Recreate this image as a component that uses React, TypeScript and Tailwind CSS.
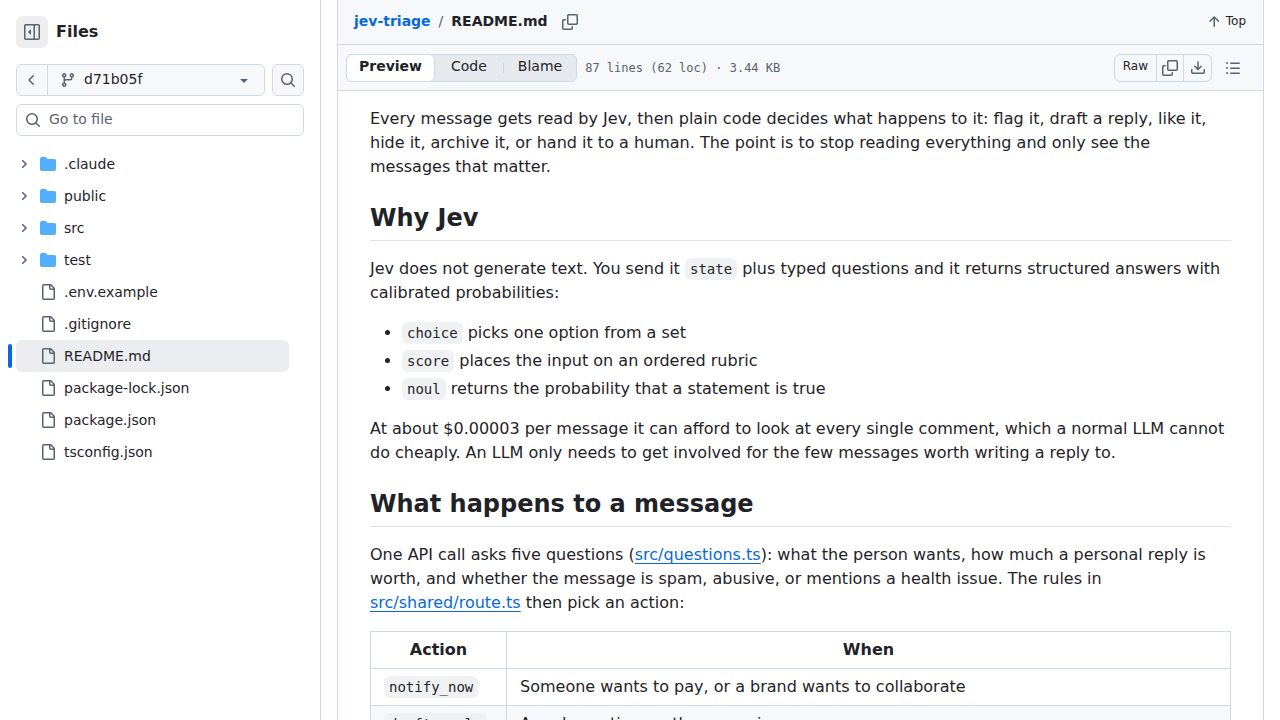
import { clsx } from "clsx";
import type { ReactNode } from "react";

/** Icon outlines, 16px grid unless a size is given */
const ICONS = {
  sidebar: [
    "m4.177 7.823 2.396-2.396A.25.25 0 0 1 7 5.604v4.792a.25.25 0 0 1-.427.177L4.177 8.177a.25.25 0 0 1 0-.354Z",
    "M0 1.75C0 .784.784 0 1.75 0h12.5C15.216 0 16 .784 16 1.75v12.5A1.75 1.75 0 0 1 14.25 16H1.75A1.75 1.75 0 0 1 0 14.25Zm1.75-.25a.25.25 0 0 0-.25.25v12.5c0 .138.112.25.25.25H9.5v-13Zm12.5 13a.25.25 0 0 0 .25-.25V1.75a.25.25 0 0 0-.25-.25H11v13Z",
  ],
  chevronLeft: [
    "M9.78 12.78a.75.75 0 0 1-1.06 0L4.47 8.53a.75.75 0 0 1 0-1.06l4.25-4.25a.751.751 0 0 1 1.042.018.751.751 0 0 1 .018 1.042L6.06 8l3.72 3.72a.75.75 0 0 1 0 1.06Z",
  ],
  chevronRight: [
    "M4.7 10c-.2 0-.4-.1-.5-.2-.3-.3-.3-.8 0-1.1L6.9 6 4.2 3.3c-.3-.3-.3-.8 0-1.1.3-.3.8-.3 1.1 0l3.3 3.2c.3.3.3.8 0 1.1L5.3 9.7c-.2.2-.4.3-.6.3Z",
  ],
  branch: [
    "M9.5 3.25a2.25 2.25 0 1 1 3 2.122V6A2.5 2.5 0 0 1 10 8.5H6a1 1 0 0 0-1 1v1.128a2.251 2.251 0 1 1-1.5 0V5.372a2.25 2.25 0 1 1 1.5 0v1.836A2.493 2.493 0 0 1 6 7h4a1 1 0 0 0 1-1v-.628A2.25 2.25 0 0 1 9.5 3.25Zm-6 0a.75.75 0 1 0 1.5 0 .75.75 0 0 0-1.5 0Zm8.25-.75a.75.75 0 1 0 0 1.5.75.75 0 0 0 0-1.5ZM4.25 12a.75.75 0 1 0 0 1.5.75.75 0 0 0 0-1.5Z",
  ],
  search: [
    "M10.68 11.74a6 6 0 0 1-7.922-8.982 6 6 0 0 1 8.982 7.922l3.04 3.04a.749.749 0 0 1-.326 1.275.749.749 0 0 1-.734-.215ZM11.5 7a4.499 4.499 0 1 0-8.997 0A4.499 4.499 0 0 0 11.5 7Z",
  ],
  triangleDown: [
    "m4.427 7.427 3.396 3.396a.25.25 0 0 0 .354 0l3.396-3.396A.25.25 0 0 0 11.396 7H4.604a.25.25 0 0 0-.177.427Z",
  ],
  folder: [
    "M1.75 1A1.75 1.75 0 0 0 0 2.75v10.5C0 14.216.784 15 1.75 15h12.5A1.75 1.75 0 0 0 16 13.25v-8.5A1.75 1.75 0 0 0 14.25 3H7.5a.25.25 0 0 1-.2-.1l-.9-1.2C6.07 1.26 5.55 1 5 1H1.75Z",
  ],
  file: [
    "M2 1.75C2 .784 2.784 0 3.75 0h6.586c.464 0 .909.184 1.237.513l2.914 2.914c.329.328.513.773.513 1.237v9.586A1.75 1.75 0 0 1 13.25 16h-9.5A1.75 1.75 0 0 1 2 14.25Zm1.75-.25a.25.25 0 0 0-.25.25v12.5c0 .138.112.25.25.25h9.5a.25.25 0 0 0 .25-.25V6h-2.75A1.75 1.75 0 0 1 9 4.25V1.5Zm6.75.062V4.25c0 .138.112.25.25.25h2.688l-.011-.013-2.914-2.914-.013-.011Z",
  ],
  copy: [
    "M0 6.75C0 5.784.784 5 1.75 5h1.5a.75.75 0 0 1 0 1.5h-1.5a.25.25 0 0 0-.25.25v7.5c0 .138.112.25.25.25h7.5a.25.25 0 0 0 .25-.25v-1.5a.75.75 0 0 1 1.5 0v1.5A1.75 1.75 0 0 1 9.25 16h-7.5A1.75 1.75 0 0 1 0 14.25Z",
    "M5 1.75C5 .784 5.784 0 6.75 0h7.5C15.216 0 16 .784 16 1.75v7.5A1.75 1.75 0 0 1 14.25 11h-7.5A1.75 1.75 0 0 1 5 9.25Zm1.75-.25a.25.25 0 0 0-.25.25v7.5c0 .138.112.25.25.25h7.5a.25.25 0 0 0 .25-.25v-7.5a.25.25 0 0 0-.25-.25Z",
  ],
  download: [
    "M2.75 14A1.75 1.75 0 0 1 1 12.25v-2.5a.75.75 0 0 1 1.5 0v2.5c0 .138.112.25.25.25h10.5a.25.25 0 0 0 .25-.25v-2.5a.75.75 0 0 1 1.5 0v2.5A1.75 1.75 0 0 1 13.25 14Z",
    "M7.25 7.689V2a.75.75 0 0 1 1.5 0v5.689l1.97-1.969a.749.749 0 1 1 1.06 1.06l-3.25 3.25a.749.749 0 0 1-1.06 0L4.22 6.78a.749.749 0 1 1 1.06-1.06l1.97 1.969Z",
  ],
  list: [
    "M5.75 2.5h8.5a.75.75 0 0 1 0 1.5h-8.5a.75.75 0 0 1 0-1.5Zm0 5h8.5a.75.75 0 0 1 0 1.5h-8.5a.75.75 0 0 1 0-1.5Zm0 5h8.5a.75.75 0 0 1 0 1.5h-8.5a.75.75 0 0 1 0-1.5ZM2 14a1 1 0 1 1 0-2 1 1 0 0 1 0 2Zm1-6a1 1 0 1 1-2 0 1 1 0 0 1 2 0ZM2 4a1 1 0 1 1 0-2 1 1 0 0 1 0 2Z",
  ],
  arrowUp: [
    "M3.47 7.78a.75.75 0 0 1 0-1.06l4.25-4.25a.75.75 0 0 1 1.06 0l4.25 4.25a.751.751 0 0 1-.018 1.042.751.751 0 0 1-1.042.018L9 4.81v7.44a.75.75 0 0 1-1.5 0V4.81L4.53 7.78a.75.75 0 0 1-1.06 0Z",
  ],
};

interface IconProps {
  name: keyof typeof ICONS;
  size?: number;
  className?: string;
}

function Icon({ name, size = 16, className }: IconProps) {
  return (
    <svg
      width={size}
      height={size}
      viewBox={`0 0 ${size} ${size}`}
      fill="currentColor"
      aria-hidden="true"
      className={clsx("shrink-0", className)}
    >
      {ICONS[name].map((d) => (
        <path key={d} d={d} />
      ))}
    </svg>
  );
}

const TREE = [
  { name: ".claude", folder: true },
  { name: "public", folder: true },
  { name: "src", folder: true },
  { name: "test", folder: true },
  { name: ".env.example" },
  { name: ".gitignore" },
  { name: "README.md" },
  { name: "package-lock.json" },
  { name: "package.json" },
  { name: "tsconfig.json" },
];

const CURRENT_FILE = "README.md";

const ANSWERS = [
  { type: "choice", text: "picks one option from a set" },
  { type: "score", text: "places the input on an ordered rubric" },
  { type: "noul", text: "returns the probability that a statement is true" },
];

const ACTIONS = [
  {
    action: "notify_now",
    when: "Someone wants to pay, or a brand wants to collaborate",
  },
  { action: "draft_reply", when: "A real question, or they were in" },
];

function Sidebar() {
  return (
    <aside className="w-[321px] shrink-0 border-r border-[#d1d9e0] p-4">
      <div className="flex items-center gap-2">
        <button
          aria-label="Collapse file tree"
          className="flex size-8 items-center justify-center rounded-md bg-[#eceef0] text-[#59636e]"
        >
          <Icon name="sidebar" />
        </button>
        <h2 className="text-base font-bold">Files</h2>
      </div>

      <div className="mt-4 flex gap-[7px]">
        <div className="flex h-8 flex-1 rounded-md border border-[#d1d9e0] bg-[#f6f8fa]">
          <button
            aria-label="Back"
            className="flex w-[31px] items-center justify-center border-r border-[#d1d9e0] text-[#59636e]"
          >
            <Icon name="chevronLeft" />
          </button>
          <button className="flex flex-1 items-center gap-2 px-3">
            <Icon name="branch" className="text-[#59636e]" />
            <span className="pb-[2px]">d71b05f</span>
            <Icon name="triangleDown" className="ml-auto text-[#59636e]" />
          </button>
        </div>
        <button
          aria-label="Search this repository"
          className="flex size-8 items-center justify-center rounded-md border border-[#d1d9e0] bg-[#f6f8fa] text-[#59636e]"
        >
          <Icon name="search" />
        </button>
      </div>

      <label className="mt-2 flex h-8 items-center gap-2 rounded-md border border-[#d1d9e0] px-2 text-[#59636e]">
        <Icon name="search" />
        <input
          type="text"
          aria-label="Go to file"
          placeholder="Go to file"
          className="min-w-0 flex-1 pb-[2px] outline-none placeholder:text-[#59636e]"
        />
      </label>

      {/* File tree */}
      <ul className="mt-3 mr-[15px]">
        {TREE.map(({ name, folder }) => (
          <li key={name} className="relative">
            {name === CURRENT_FILE && (
              <span className="absolute top-1 -left-2 h-6 w-1 rounded-md bg-[#0969da]" />
            )}
            <a
              href={`#${name}`}
              className={clsx(
                "flex h-8 items-center rounded-md",
                name === CURRENT_FILE && "bg-[#ebedf0]",
              )}
            >
              <span className="flex w-6 pl-[2px] text-[#59636e]">
                {folder && <Icon name="chevronRight" size={12} />}
              </span>
              <Icon
                name={folder ? "folder" : "file"}
                className={folder ? "text-[#54aeff]" : "text-[#59636e]"}
              />
              <span className="pl-2">{name}</span>
            </a>
          </li>
        ))}
      </ul>
    </aside>
  );
}

function FileHeader() {
  return (
    <header className="bg-[#f6f8fa]">
      <div className="flex h-[45px] items-center border-b border-[#d1d9e0] pr-[17px] pl-4">
        <nav className="flex items-center gap-2 pb-[2px]">
          <a href="#root" className="font-bold text-[#0969da]">
            jev-triage
          </a>
          <span className="text-[#59636e]">/</span>
          <h1 className="font-bold">README.md</h1>
        </nav>
        <button aria-label="Copy path" className="ml-[14px] text-[#59636e]">
          <Icon name="copy" />
        </button>
        <a href="#top" className="ml-auto flex items-center gap-1 text-xs">
          <Icon name="arrowUp" className="text-[#59636e]" />
          <span className="pb-[2px]">Top</span>
        </a>
      </div>

      <div className="flex h-[46px] items-center border-b border-[#d1d9e0] pr-4 pl-2">
        <div className="flex h-7 rounded-md border border-[#d1d9e0] bg-[#e6eaef]">
          <button className="-m-px rounded-md border border-[#d1d9e0] bg-white px-3 pb-1 font-bold">
            Preview
          </button>
          <button className="pr-4 pb-1 pl-[17px]">Code</button>
          <span className="my-2 w-px bg-[#d1d9e0]" />
          <button className="px-[14px] pb-1">Blame</button>
        </div>
        <span className="ml-2 font-['DejaVu_Sans_Mono',monospace] text-xs text-[#59636e]">
          87 lines (62 loc) · 3.44 KB
        </span>

        <div className="ml-auto flex h-7 divide-x divide-[#d1d9e0] rounded-md border border-[#d1d9e0] text-xs">
          <button className="px-2 pb-1">Raw</button>
          <button
            aria-label="Copy raw file"
            className="flex w-[27px] items-center justify-center text-[#59636e]"
          >
            <Icon name="copy" />
          </button>
          <button
            aria-label="Download raw file"
            className="flex w-[27px] items-center justify-center text-[#59636e]"
          >
            <Icon name="download" />
          </button>
        </div>
        <button
          aria-label="Outline"
          className="ml-[7px] flex size-7 items-center justify-center text-[#59636e]"
        >
          <Icon name="list" />
        </button>
      </div>
    </header>
  );
}

function Code({ children }: { children: ReactNode }) {
  return (
    <code className="rounded-md bg-[#eff1f3] px-[5px] py-[3px] font-['DejaVu_Sans_Mono',monospace] text-sm/4">
      {children}
    </code>
  );
}

function Heading({ children }: { children: ReactNode }) {
  return (
    <h2 className="mt-6 mb-4 border-b border-[#dfe4e9] pb-[7px] text-2xl/[30px] font-bold">
      {children}
    </h2>
  );
}

function SourceLink({ path }: { path: string }) {
  return (
    <a
      href={`#${path}`}
      className="text-[#0969da] underline underline-offset-3"
    >
      {path}
    </a>
  );
}

function Readme() {
  return (
    <article className="px-8 pt-4 text-base/6">
      <p>
        Every message gets read by Jev, then plain code decides what happens to
        it: flag it, draft a reply, like it, hide it, archive it, or hand it to
        a human. The point is to stop reading everything and only see the
        messages that matter.
      </p>

      <Heading>Why Jev</Heading>
      <p>
        Jev does not generate text. You send it <Code>state</Code> plus typed
        questions and it returns structured answers with calibrated
        probabilities:
      </p>
      <ul className="my-4 list-disc space-y-1 pl-8">
        {ANSWERS.map(({ type, text }) => (
          <li key={type}>
            <Code>{type}</Code> {text}
          </li>
        ))}
      </ul>
      <p>
        At about $0.00003 per message it can afford to look at every single
        comment, which a normal LLM cannot do cheaply. An LLM only needs to get
        involved for the few messages worth writing a reply to.
      </p>

      <Heading>What happens to a message</Heading>
      <p>
        One API call asks five questions (<SourceLink path="src/questions.ts" />
        ): what the person wants, how much a personal reply is worth, and
        whether the message is spam, abusive, or mentions a health issue. The
        rules in <SourceLink path="src/shared/route.ts" /> then pick an action:
      </p>

      <table className="mt-4 w-full border-collapse">
        <thead>
          <tr>
            <th className="w-[136px] border border-[#d1d9e0] px-[13px] py-[6px]">
              Action
            </th>
            <th className="border border-[#d1d9e0] px-[13px] py-[6px]">When</th>
          </tr>
        </thead>
        <tbody>
          {ACTIONS.map(({ action, when }) => (
            <tr key={action} className="even:bg-[#f6f8fa]">
              <td className="border border-[#d1d9e0] px-[13px] py-[6px]">
                <Code>{action}</Code>
              </td>
              <td className="border border-[#d1d9e0] px-[13px] py-[6px]">
                {when}
              </td>
            </tr>
          ))}
        </tbody>
      </table>
    </article>
  );
}

export default function App() {
  return (
    <div className="flex h-screen overflow-hidden bg-white font-['DejaVu_Sans',sans-serif] text-sm text-[#1f2328]">
      <Sidebar />
      <main className="mx-4 min-w-0 flex-1 border-x border-[#d1d9e0]">
        <FileHeader />
        <Readme />
      </main>
    </div>
  );
}
